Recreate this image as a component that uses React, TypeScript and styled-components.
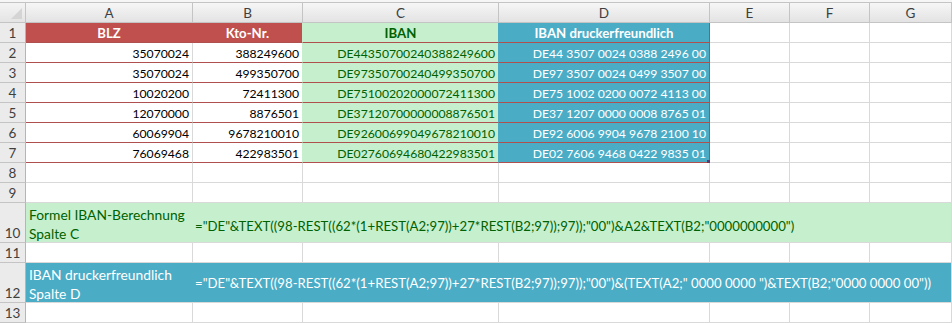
import React from "react";
import styled, { createGlobalStyle } from "styled-components";

const GlobalStyle = createGlobalStyle`
  html, body { margin: 0; padding: 0; background: #ffffff; }
  body { font-family: Lato, "Open Sans", sans-serif; }
`;

const RED = "#c0504d";
const RED_LINE = "#b0504e";
const GREEN = "#c6efce";
const GREEN_TEXT = "#006100";
const BLUE = "#4bacc6";
const GRID = "#d9d9d9";
const HEAD_LINE = "#c4c4c4";

const Sheet = styled.div`
  display: grid;
  grid-template-columns: 26px 167px 110px 196px 211px 80px 80px 82px;
  grid-template-rows: 3px 20px repeat(9, 20px) 40px 20px 40px 20px;
  width: 952px;
  height: 323px;
  overflow: hidden;
  font-family: Lato, "Open Sans", sans-serif;
  font-size: 12.2px;
`;

const TopStrip = styled.div`
  grid-column: 1 / -1;
  background: #f6f6f6;
  border-bottom: 1px solid ${HEAD_LINE};
  box-sizing: border-box;
`;

const Corner = styled.div`
  position: relative;
  background: linear-gradient(#f4f4f4, #e4e4e4);
  border-right: 1px solid ${HEAD_LINE};
  border-bottom: 1px solid ${HEAD_LINE};
  box-sizing: border-box;
  &::after {
    content: "";
    position: absolute;
    right: 3px;
    bottom: 3px;
    width: 0;
    height: 0;
    border-left: 11px solid transparent;
    border-bottom: 11px solid #d4d4d4;
  }
`;

const ColHead = styled.div`
  display: flex;
  align-items: center;
  justify-content: center;
  background: linear-gradient(#f6f6f6, #e3e3e3);
  border-right: 1px solid ${HEAD_LINE};
  border-bottom: 1px solid ${HEAD_LINE};
  box-sizing: border-box;
  color: #3f3f3f;
  font-size: 13.5px;
  padding-top: 1px;
`;

const RowHead = styled.div<{ $tall?: boolean }>`
  display: flex;
  align-items: ${(p) => (p.$tall ? "flex-end" : "center")};
  justify-content: center;
  padding-bottom: ${(p) => (p.$tall ? "1px" : "0")};
  padding-top: ${(p) => (p.$tall ? "0" : "1px")};
  background: #ebebeb;
  border-right: 1px solid #b5b5b5;
  border-bottom: 1px solid ${HEAD_LINE};
  box-sizing: border-box;
  color: #3f3f3f;
  font-size: 13.5px;
`;

const Cell = styled.div<{
  $bg?: string;
  $fg?: string;
  $bold?: boolean;
  $align?: "left" | "right" | "center";
  $bottom?: string;
  $right?: string;
}>`
  position: relative;
  display: flex;
  align-items: center;
  justify-content: ${(p) =>
    p.$align === "right" ? "flex-end" : p.$align === "center" ? "center" : "flex-start"};
  padding: 1px 3px 0 3px;
  background: ${(p) => p.$bg || "#ffffff"};
  color: ${(p) => p.$fg || "#000000"};
  font-weight: ${(p) => (p.$bold ? 700 : 400)};
  font-size: ${(p) => (p.$bold ? "13.2px" : "12.2px")};
  border-right: 1px solid ${(p) => p.$right || GRID};
  border-bottom: 1px solid ${(p) => p.$bottom || GRID};
  box-sizing: border-box;
  white-space: pre;
  overflow: visible;
`;

const Handle = styled.span`
  position: absolute;
  right: -1px;
  bottom: -1px;
  width: 3px;
  height: 3px;
  background: #5b3b74;
`;

const WideLabel = styled.div<{ $bg: string; $fg: string }>`
  padding: 2px 3px 0 3px;
  background: ${(p) => p.$bg};
  color: ${(p) => p.$fg};
  line-height: 19px;
  font-size: 13.8px;
  border-bottom: 1px solid ${GRID};
  box-sizing: border-box;
  white-space: nowrap;
`;

const WideFormula = styled.div<{ $bg: string; $fg: string; $shift: number }>`
  grid-column: span 6;
  display: flex;
  align-items: center;
  padding: ${(p) => p.$shift}px 2px 0 2px;
  background: ${(p) => p.$bg};
  color: ${(p) => p.$fg};
  font-size: 13.2px;
  border-right: 1px solid ${GRID};
  border-bottom: 1px solid ${GRID};
  box-sizing: border-box;
  white-space: pre;
`;

const COLS = ["A", "B", "C", "D", "E", "F", "G"];

const DATA: [string, string, string, string][] = [
  ["35070024", "388249600", "DE44350700240388249600", "DE44 3507 0024 0388 2496 00"],
  ["35070024", "499350700", "DE97350700240499350700", "DE97 3507 0024 0499 3507 00"],
  ["10020200", "72411300", "DE75100202000072411300", "DE75 1002 0200 0072 4113 00"],
  ["12070000", "8876501", "DE37120700000008876501", "DE37 1207 0000 0008 8765 01"],
  ["60069904", "9678210010", "DE92600699049678210010", "DE92 6006 9904 9678 2100 10"],
  ["76069468", "422983501", "DE02760694680422983501", "DE02 7606 9468 0422 9835 01"],
];

const F1 = '="DE"&TEXT((98-REST((62*(1+REST(A2;97))+27*REST(B2;97));97));"00")&A2&TEXT(B2;"0000000000")';
const F2 =
  '="DE"&TEXT((98-REST((62*(1+REST(A2;97))+27*REST(B2;97));97));"00")&(TEXT(A2;" 0000 0000 ")&TEXT(B2;"0000 0000 00"))';

const EmptyRest: React.FC = () => (
  <>
    <Cell />
    <Cell />
    <Cell />
  </>
);

const EmptyRow: React.FC<{ row: number }> = ({ row }) => (
  <>
    <RowHead>{row}</RowHead>
    {COLS.map((c) => (
      <Cell key={c + row} />
    ))}
  </>
);

export default function App() {
  return (
    <>
      <GlobalStyle />
      <Sheet>
        <TopStrip />
        <Corner />
        {COLS.map((c) => (
          <ColHead key={c}>{c}</ColHead>
        ))}

        <RowHead>1</RowHead>
        <Cell $bg={RED} $fg="#ffffff" $bold $align="center" $right={RED} $bottom={RED_LINE}>
          BLZ
        </Cell>
        <Cell $bg={RED} $fg="#ffffff" $bold $align="center" $right={GREEN} $bottom={RED_LINE}>
          Kto-Nr.
        </Cell>
        <Cell $bg={GREEN} $fg={GREEN_TEXT} $bold $align="center" $right={BLUE} $bottom={RED_LINE}>
          IBAN
        </Cell>
        <Cell $bg={BLUE} $fg="#ffffff" $bold $align="center" $right={RED_LINE} $bottom={RED_LINE}>
          IBAN druckerfreundlich
        </Cell>
        <EmptyRest />

        {DATA.map((r, i) => (
          <React.Fragment key={i}>
            <RowHead>{i + 2}</RowHead>
            <Cell $align="right" $bottom={RED_LINE}>
              {r[0]}
            </Cell>
            <Cell $align="right" $bottom={RED_LINE} $right={GREEN}>
              {r[1]}
            </Cell>
            <Cell $bg={GREEN} $fg={GREEN_TEXT} $align="right" $bottom={RED_LINE} $right={BLUE}>
              {r[2]}
            </Cell>
            <Cell $bg={BLUE} $fg="#ffffff" $align="right" $bottom={RED_LINE} $right={RED_LINE}>
              {r[3]}
              {i === DATA.length - 1 && <Handle />}
            </Cell>
            <EmptyRest />
          </React.Fragment>
        ))}

        <EmptyRow row={8} />
        <EmptyRow row={9} />

        <RowHead $tall>10</RowHead>
        <WideLabel $bg={GREEN} $fg={GREEN_TEXT}>
          Formel IBAN-Berechnung
          <br />
          Spalte C
        </WideLabel>
        <WideFormula $bg={GREEN} $fg={GREEN_TEXT} $shift={7}>
          {F1}
        </WideFormula>

        <EmptyRow row={11} />

        <RowHead $tall>12</RowHead>
        <WideLabel $bg={BLUE} $fg="#ffffff">
          IBAN druckerfreundlich
          <br />
          Spalte D
        </WideLabel>
        <WideFormula $bg={BLUE} $fg="#ffffff" $shift={1}>
          {F2}
        </WideFormula>

        <EmptyRow row={13} />
      </Sheet>
    </>
  );
}
